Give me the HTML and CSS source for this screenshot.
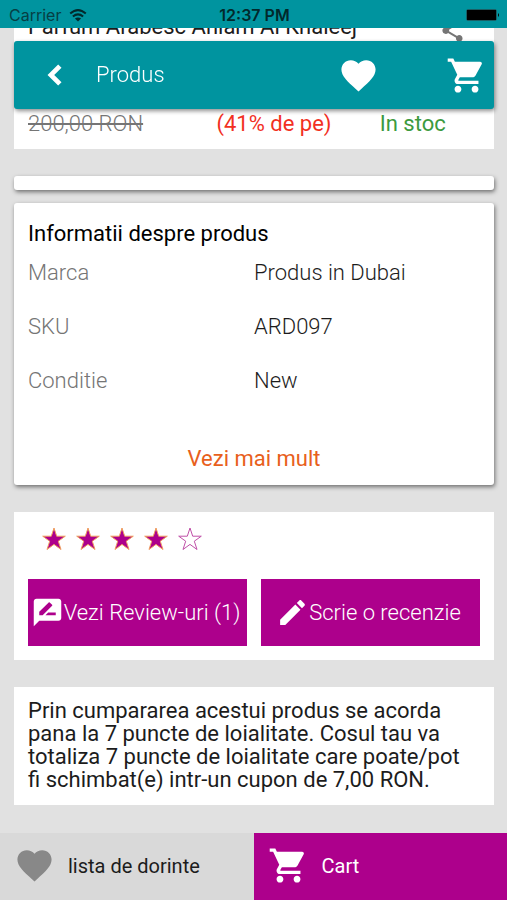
FILE: index.html
```html
<!DOCTYPE html>
<html lang="ro">
<head>
<meta charset="utf-8">
<meta name="viewport" content="width=device-width, initial-scale=1">
<title>Produs</title>
<link rel="stylesheet" href="styles.css">
</head>
<body>
<svg class="defs" aria-hidden="true">
  <symbol id="heart" viewBox="0 0 24 24"><path d="M12 21.35l-1.45-1.32C5.4 15.36 2 12.28 2 8.5 2 5.42 4.42 3 7.5 3c1.74 0 3.41.81 4.5 2.09C13.09 3.81 14.76 3 16.5 3 19.58 3 22 5.42 22 8.5c0 3.78-3.4 6.86-8.55 11.54L12 21.35z"/></symbol>
  <symbol id="cart" viewBox="0 0 24 24"><path d="M7 18c-1.1 0-1.99.9-1.99 2S5.9 22 7 22s2-.9 2-2-.9-2-2-2zM1 2v2h2l3.6 7.59-1.35 2.45c-.16.28-.25.61-.25.96 0 1.1.9 2 2 2h12v-2H7.42c-.14 0-.25-.11-.25-.25l.03-.12.9-1.63h7.45c.75 0 1.41-.41 1.75-1.03l3.58-6.49c.08-.14.12-.31.12-.48 0-.55-.45-1-1-1H5.21l-.94-2H1zm16 16c-1.1 0-1.99.9-1.99 2s.89 2 1.99 2 2-.9 2-2-.9-2-2-2z"/></symbol>
  <symbol id="star" viewBox="0 0 26 26"><path d="M13 2l2.7 8.2h8.6l-7 5 2.7 8.3-7-5.1-7 5.1 2.7-8.3-7-5h8.6z"/></symbol>
</svg>

<div class="statusbar">
  <span class="carrier">Carrier
    <svg class="wifi" viewBox="0 0 18 13"><path d="M1.200 4.600Q9-2.400 16.800 4.600M3.900 7.600Q9 3.200 14.100 7.600" fill="none" stroke="currentColor" stroke-width="2"/><path d="M9 12.500L5.900 9.600Q9 7.200 12.100 9.600z" fill="currentColor"/></svg>
  </span>
  <span class="clock">12:37 PM</span>
  <svg class="battery" viewBox="0 0 34 12"><rect x=".5" y=".5" width="30" height="11" rx="1.500" fill="none" stroke="#1a5f65"/><rect x="1" y="1" width="29" height="10"/><path d="M32 4q2 2 0 4z"/></svg>
</div>

<header class="toolbar">
  <button class="icon-button" aria-label="Inapoi"><svg class="icon-back" viewBox="0 0 24 24"><path d="M15.410 7.410L14 6l-6 6 6 6 1.410-1.410L10.830 12z"/></svg></button>
  <h1>Produs</h1>
  <button class="icon-button favorite" aria-label="Favorite"><svg class="icon"><use href="#heart"/></svg></button>
  <button class="icon-button" aria-label="Cos"><svg class="icon"><use href="#cart"/></svg></button>
</header>

<main>
  <section class="card product">
    <div class="product-head">
      <h2>Parfum Arabesc Ahlam Al Khaleej</h2>
      <button class="icon-button share" aria-label="Distribuie"><svg class="icon-share" viewBox="0 0 24 24"><path d="M18 16.080c-.76 0-1.440.3-1.960.77L8.910 12.700c.05-.23.09-.46.09-.7s-.04-.47-.09-.7l7.050-4.110c.54.5 1.250.81 2.040.81 1.660 0 3-1.340 3-3s-1.340-3-3-3-3 1.340-3 3c0 .24.04.47.09.7L8.040 9.810C7.500 9.310 6.790 9 6 9c-1.660 0-3 1.340-3 3s1.340 3 3 3c.79 0 1.500-.31 2.040-.81l7.120 4.160c-.05.21-.08.43-.08.65 0 1.610 1.310 2.920 2.920 2.920s2.920-1.310 2.920-2.920-1.310-2.920-2.920-2.920z"/></svg></button>
    </div>
    <div class="price-row">
      <del>200,00 RON</del>
      <span class="discount">(41% de pe)</span>
      <span class="stock">In stoc</span>
    </div>
  </section>

  <div class="card raised strip"></div>

  <section class="card raised info">
    <h2>Informatii despre produs</h2>
    <dl>
      <dt>Marca</dt><dd>Produs in Dubai</dd>
      <dt>SKU</dt><dd>ARD097</dd>
      <dt>Conditie</dt><dd>New</dd>
    </dl>
    <a class="more" href="#">Vezi mai mult</a>
  </section>

  <section class="card reviews">
    <div class="stars" role="img" aria-label="4 din 5">
      <svg class="full"><use href="#star"/></svg>
      <svg class="full"><use href="#star"/></svg>
      <svg class="full"><use href="#star"/></svg>
      <svg class="full"><use href="#star"/></svg>
      <svg class="empty"><use href="#star"/></svg>
    </div>
    <div class="actions">
      <button><svg viewBox="0 0 24 24"><path d="M20 2H4c-1.100 0-1.990.9-1.990 2L2 22l4-4h14c1.100 0 2-.9 2-2V4c0-1.100-.9-2-2-2zM6 14v-2.470l6.880-6.880c.2-.2.51-.2.71 0l1.770 1.770c.2.2.2.51 0 .71L8.470 14H6zm12 0h-7.500l2-2H18v2z"/></svg>Vezi Review-uri (1)</button>
      <button><svg viewBox="0 0 24 24"><path d="M3 17.250V21h3.750L17.810 9.940l-3.750-3.750L3 17.250zM20.710 7.040c.39-.39.39-1.020 0-1.410l-2.340-2.340c-.39-.39-1.020-.39-1.410 0l-1.830 1.830 3.750 3.750 1.830-1.830z"/></svg>Scrie o recenzie</button>
    </div>
  </section>

  <section class="card loyalty">
    <p>Prin cumpararea acestui produs se acorda pana la 7 puncte de loialitate. Cosul tau va totaliza 7 puncte de loialitate care poate/pot fi schimbat(e) intr-un cupon de 7,00 RON.</p>
  </section>
</main>

<nav class="bottombar">
  <a class="wishlist" href="#"><svg class="icon"><use href="#heart"/></svg>lista de dorinte</a>
  <a class="cart" href="#"><svg class="icon"><use href="#cart"/></svg>Cart</a>
</nav>
</body>
</html>
```
FILE: styles.css
```css
* { box-sizing: border-box; }

body {
  margin: 0;
  background: #e1e1e1;
  color: #1c1c1c;
  font-family: Roboto, "Liberation Sans", sans-serif;
  font-size: 22px;
  line-height: 26px;
}

h1, h2, p, dl, dd { margin: 0; }
h1, h2 { font-size: inherit; font-weight: 400; }
a { color: inherit; text-decoration: none; }
button { font: inherit; color: inherit; border: 0; padding: 0; background: none; }
svg { display: block; flex: none; fill: currentColor; }
.defs { position: absolute; width: 0; height: 0; }
.icon { width: 41px; height: 41px; }

.statusbar {
  position: fixed;
  inset: 0 0 auto;
  z-index: 3;
  display: grid;
  grid-template-columns: 1fr auto 1fr;
  align-items: center;
  height: 28px;
  padding: 2px 7px 0 9px;
  background: #00949f;
  color: #063f44;
  font-family: Inter, sans-serif;
  font-size: 16px;
}
.carrier { display: flex; align-items: center; gap: 8px; }
.wifi { width: 18px; height: 13px; color: #02292c; }
.clock { color: #02292c; font-weight: 600; }
.battery { justify-self: end; width: 34px; height: 12px; fill: #000; }

.toolbar {
  position: fixed;
  inset: 41px 13px auto 14px;
  z-index: 2;
  display: flex;
  align-items: center;
  height: 68px;
  padding: 0 7px 0 22px;
  border-radius: 3px;
  background: #00949f;
  color: #fff;
  box-shadow: 1px 2px 4px rgba(0, 0, 0, .45);
}
.toolbar h1 { flex: 1; padding-left: 22px; font-weight: 300; }
.icon-back { width: 38px; height: 38px; stroke: currentColor; }
.favorite { margin-right: 67px; }

main { padding: 0 13px 94px 14px; }
.card { background: #fff; padding: 0 14px; }
.raised { border-radius: 3px; box-shadow: 1px 2px 4px rgba(0, 0, 0, .5); }

.product { padding-top: 14px; padding-bottom: 12px; }
.product-head { display: flex; justify-content: space-between; height: 97px; }
.share { align-self: flex-start; padding: 3px 14px 0 0; color: #757575; }
.icon-share { width: 27px; height: 27px; }
.price-row { display: flex; }
.price-row del { flex: 188; color: #757575; font-weight: 300; }
.discount { flex: 163; color: #f2301f; }
.stock { flex: 100; color: #3c9a3e; }

.strip { height: 14px; margin-top: 27px; }

.info { margin-top: 13px; padding-top: 18px; padding-bottom: 13px; }
.info h2 { color: #000; }
dl {
  display: grid;
  grid-template-columns: 1fr 1fr;
  row-gap: 28px;
  padding: 13px 0 52px;
  font-weight: 300;
}
dt { color: #757575; }
.more { display: block; text-align: center; color: #e8601c; }

.reviews { margin-top: 27px; padding-top: 14px; padding-bottom: 14px; }
.stars { display: flex; gap: 8px; padding: 0 13px; }
.stars svg { width: 26px; height: 26px; }
.full { fill: #ad008c; stroke: #f0a060; }
.empty { fill: none; stroke: #c050a8; }
.actions { display: grid; grid-template-columns: 1fr 1fr; gap: 14px; margin-top: 27px; }
.actions button {
  display: flex;
  align-items: center;
  justify-content: center;
  height: 67px;
  padding-right: 4px;
  background: #ad008c;
  color: #fff;
  font-weight: 300;
  white-space: nowrap;
}
.actions svg { width: 33px; height: 33px; }

.loyalty { margin-top: 27px; padding: 12px 28px 14px 14px; line-height: 23px; }

.bottombar {
  position: fixed;
  inset: auto 0 0;
  z-index: 3;
  display: grid;
  grid-template-columns: 1fr 1fr;
  height: 67px;
  font-size: 20px;
}
.bottombar a { display: flex; align-items: center; gap: 13px; padding: 0 0 2px 14px; }
.wishlist { background: #d9d9d9; }
.wishlist svg { color: #888; }
.cart { background: #ad008c; color: #fff; }
```
